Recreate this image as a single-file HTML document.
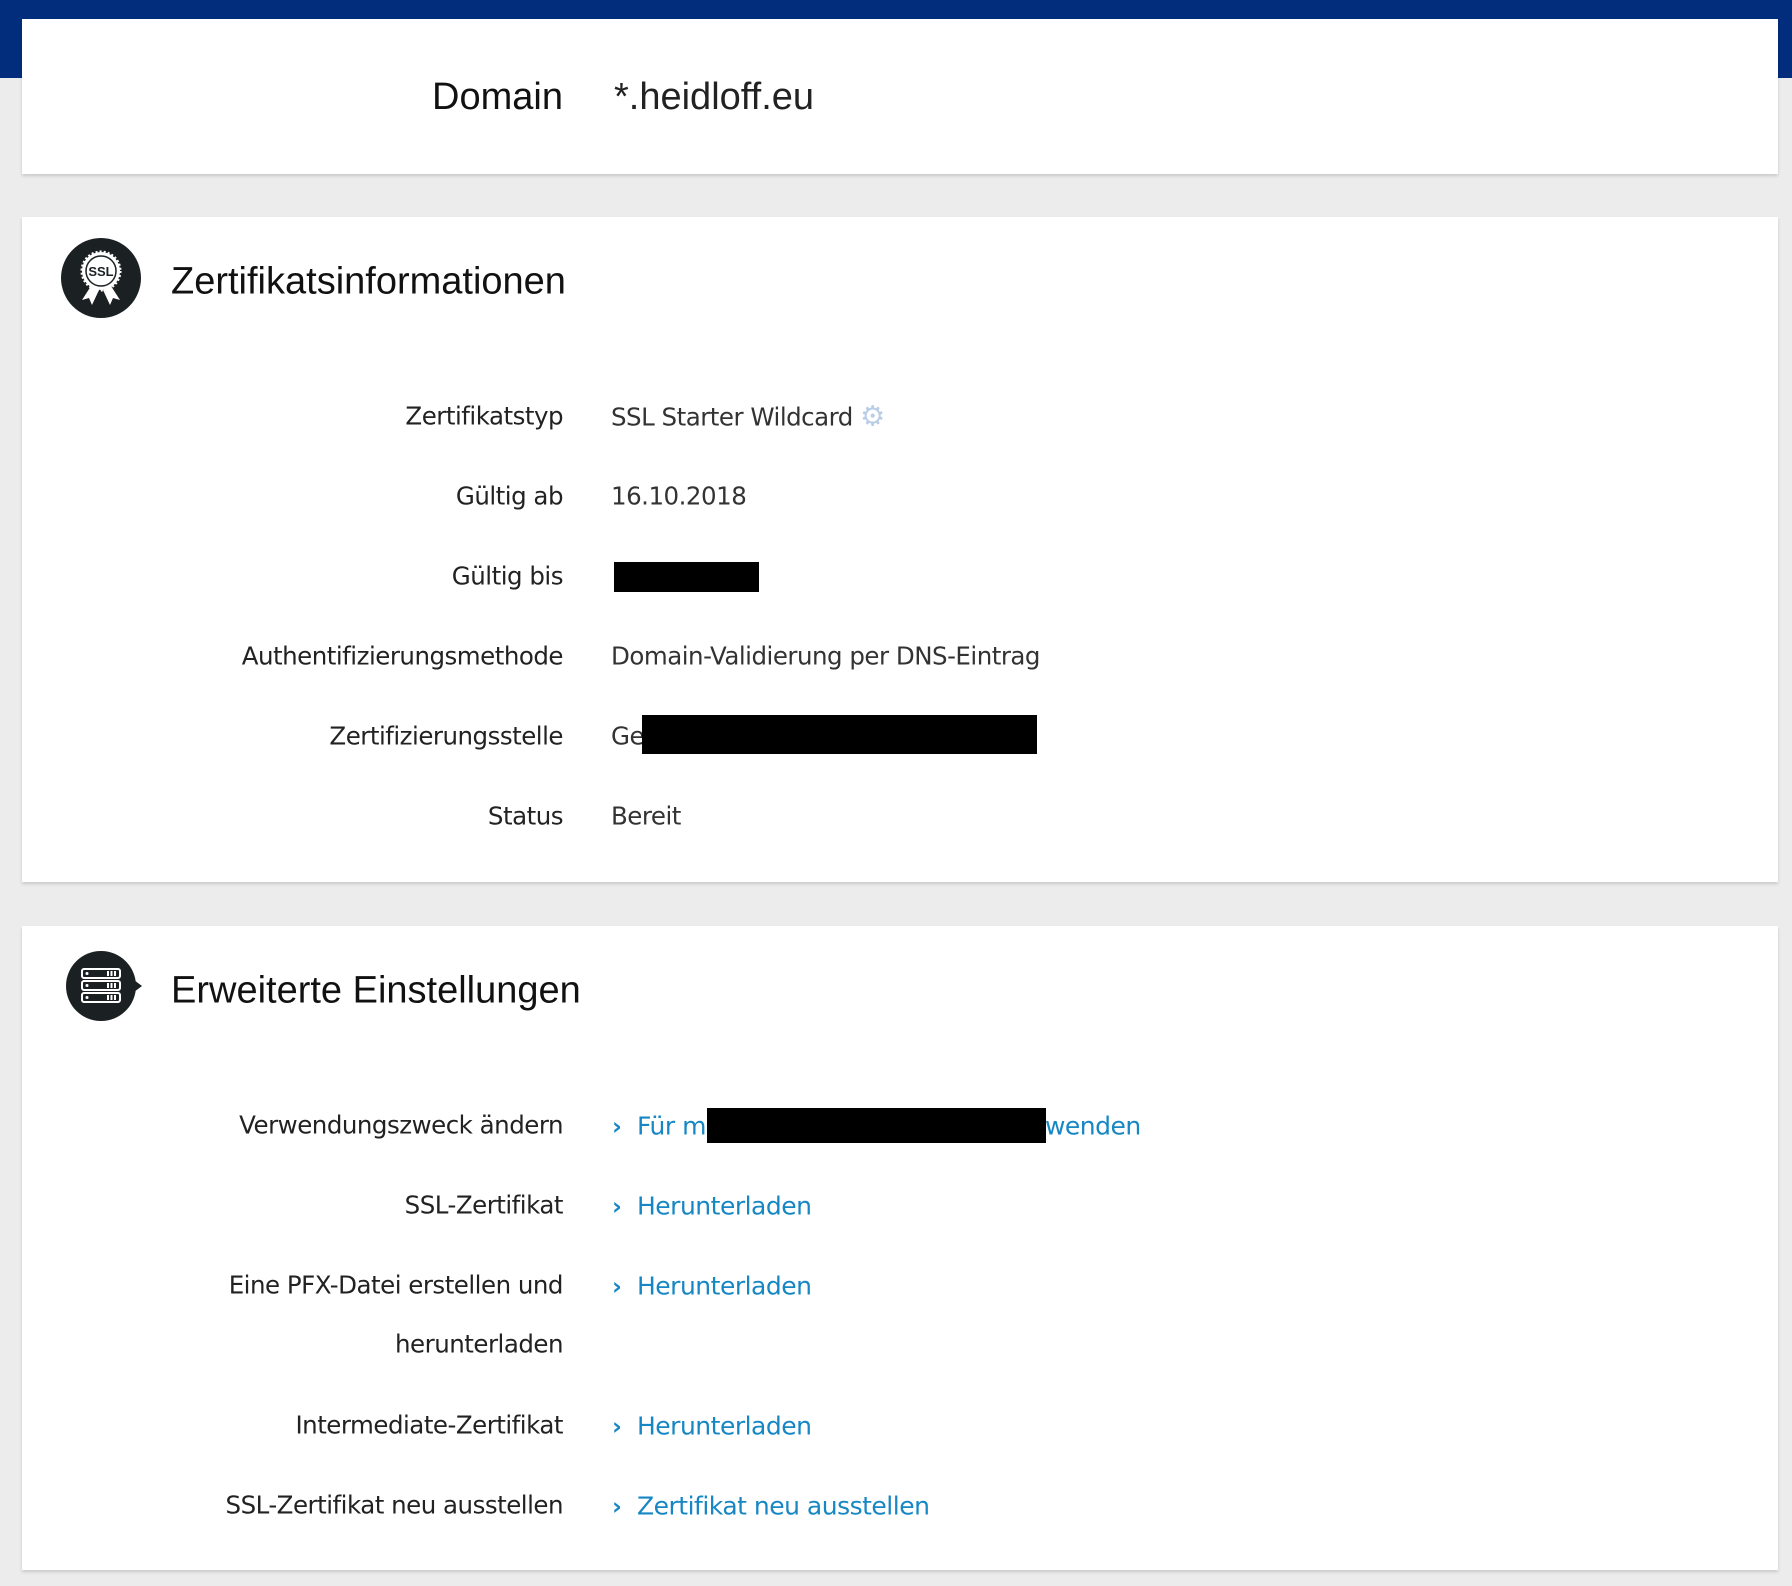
<!DOCTYPE html><html><head><meta charset="utf-8"><style>
body{margin:0;width:1792px;height:1586px;background:#ececec;position:relative;font-family:"Liberation Sans",sans-serif;overflow:hidden}
.top{position:absolute;left:0;top:0;width:1792px;height:20px;background:#022c7c}
.side{position:absolute;left:0;top:0;width:22px;height:78px;background:#022c7c}
.side2{position:absolute;right:0;top:0;width:14px;height:78px;background:#022c7c}
.card{position:absolute;left:22px;width:1756px;background:#fff;box-shadow:0 2px 3px rgba(0,0,0,.15)}
.t{position:absolute;white-space:nowrap;line-height:1}
.lab,.val,.lnk{font-family:"DejaVu Sans",sans-serif;letter-spacing:-0.5px}
.lab{position:absolute;right:1229px;font-size:24.5px;color:#222;white-space:nowrap;transform:translateY(-50%)}
.val{position:absolute;left:611px;font-size:24.5px;color:#333;white-space:nowrap;transform:translateY(-50%)}
.lnk{position:absolute;left:612px;font-size:25px;color:#1787c4;white-space:nowrap;transform:translateY(-50%)}
.lnk b{display:inline-block;width:25px;font-size:24px}
.blk{position:absolute;background:#000}
h2{position:absolute;margin:0;font-weight:normal;font-size:38px;color:#111;left:171px;transform:translateY(-50%);white-space:nowrap}
</style></head><body>
<div class="top"></div><div class="side"></div><div class="side2"></div>
<div class="card" style="top:19px;height:155px"></div>
<div class="t" style="right:1229px;top:78px;font-size:38px;color:#111">Domain</div>
<div class="t" style="left:614px;top:78px;font-size:38px;color:#222">*.heidloff.eu</div>

<div class="card" style="top:217px;height:665px"></div>
<svg style="position:absolute;left:61px;top:238px" width="80" height="80" viewBox="0 0 80 80"><circle cx="40" cy="40" r="40" fill="#1b2023"/><circle cx="40" cy="33" r="19" fill="#fff" stroke="#fff" stroke-width="3" stroke-dasharray="2 2"/><circle cx="40" cy="33" r="15" fill="none" stroke="#1b2023" stroke-width="1.5"/><text x="40" y="38" font-size="13" font-weight="bold" text-anchor="middle" fill="#1b2023" font-family="Liberation Sans">SSL</text><path d="M30 48 L21 62 L28 60 L31 67 L38 52 Z M50 48 L59 62 L52 60 L49 67 L42 52 Z" fill="#fff"/></svg>
<h2 style="top:282px">Zertifikatsinformationen</h2>
<div class="lab" style="top:416px">Zertifikatstyp</div><div class="val" style="top:416px">SSL Starter Wildcard <span style="color:#b8cde6;font-size:28px;font-weight:bold">⚙</span></div>
<div class="lab" style="top:496px">Gültig ab</div><div class="val" style="top:496px">16.10.2018</div>
<div class="lab" style="top:576px">Gültig bis</div><div class="blk" style="left:614px;top:562px;width:145px;height:30px"></div>
<div class="lab" style="top:656px">Authentifizierungsmethode</div><div class="val" style="top:656px">Domain-Validierung per DNS-Eintrag</div>
<div class="lab" style="top:736px">Zertifizierungsstelle</div><div class="val" style="top:736px">Ge</div><div class="blk" style="left:642px;top:715px;width:395px;height:39px"></div>
<div class="lab" style="top:816px">Status</div><div class="val" style="top:816px">Bereit</div>

<div class="card" style="top:926px;height:644px"></div>
<svg style="position:absolute;left:66px;top:951px" width="76" height="70" viewBox="0 0 76 70"><circle cx="35" cy="35" r="35" fill="#1b2023"/><path d="M68 29 L76 35 L68 41Z" fill="#1b2023"/><g fill="none" stroke="#fff" stroke-width="2"><rect x="16" y="18" width="38" height="9" rx="2"/><rect x="16" y="30" width="38" height="9" rx="2"/><rect x="16" y="42" width="38" height="9" rx="2"/></g><g fill="#fff"><circle cx="21" cy="22.5" r="1.5"/><circle cx="21" cy="34.5" r="1.5"/><circle cx="21" cy="46.5" r="1.5"/><rect x="41" y="20" width="2" height="5"/><rect x="44.5" y="20" width="2" height="5"/><rect x="48" y="20" width="2" height="5"/><rect x="41" y="32" width="2" height="5"/><rect x="44.5" y="32" width="2" height="5"/><rect x="48" y="32" width="2" height="5"/><rect x="41" y="44" width="2" height="5"/><rect x="44.5" y="44" width="2" height="5"/><rect x="48" y="44" width="2" height="5"/></g></svg>
<h2 style="top:991px">Erweiterte Einstellungen</h2>
<div class="lab" style="top:1125px">Verwendungszweck ändern</div><div class="lnk" style="top:1126px"><b>›</b>Für m<span style="display:inline-block;width:339px"></span>wenden</div><div class="blk" style="left:707px;top:1108px;width:339px;height:35px"></div>
<div class="lab" style="top:1205px">SSL-Zertifikat</div><div class="lnk" style="top:1206px"><b>›</b>Herunterladen</div>
<div class="lab" style="top:1285px">Eine PFX-Datei erstellen und</div><div class="lnk" style="top:1286px"><b>›</b>Herunterladen</div>
<div class="lab" style="top:1344px">herunterladen</div>
<div class="lab" style="top:1425px">Intermediate-Zertifikat</div><div class="lnk" style="top:1426px"><b>›</b>Herunterladen</div>
<div class="lab" style="top:1505px">SSL-Zertifikat neu ausstellen</div><div class="lnk" style="top:1506px"><b>›</b>Zertifikat neu ausstellen</div>
</body></html>
